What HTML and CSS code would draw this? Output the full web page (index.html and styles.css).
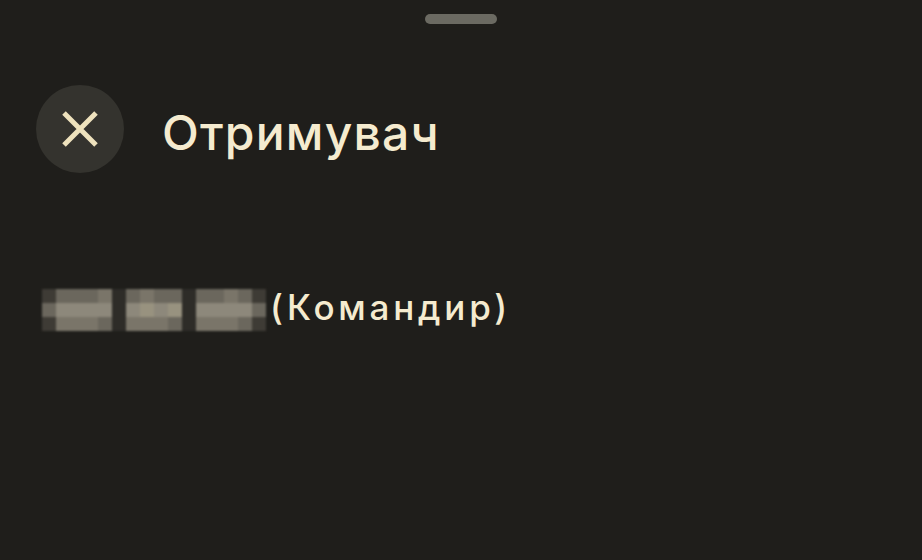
FILE: index.html
```html
<!DOCTYPE html>
<html lang="uk">
<head>
<meta charset="utf-8">
<link rel="stylesheet" href="styles.css">
</head>
<body>
<div class="sheet">
  <div class="handle"></div>
  <div class="header">
    <button class="close" aria-label="Закрити">
      <svg width="38" height="38" viewBox="0 0 38 38"><path d="M3 3 L35 35 M35 3 L3 35" stroke="#eee2bd" stroke-width="5" stroke-linecap="butt" fill="none"/></svg>
    </button>
    <h1 class="title">Отримувач</h1>
  </div>
  <div class="recipient">
    <div class="blur">
      <span class="p a"></span><span class="p b"></span><span class="p b"></span><span class="p b"></span><span class="p c"></span><span class="p d"></span><span class="p b"></span><span class="p c"></span><span class="p b"></span><span class="p b"></span><span class="p d"></span><span class="p b"></span><span class="p b"></span><span class="p c"></span><span class="p b"></span><span class="p a"></span>
      <span class="p b"></span><span class="p e"></span><span class="p e"></span><span class="p e"></span><span class="p e"></span><span class="p d"></span><span class="p e"></span><span class="p f"></span><span class="p e"></span><span class="p f"></span><span class="p d"></span><span class="p e"></span><span class="p e"></span><span class="p e"></span><span class="p e"></span><span class="p b"></span>
      <span class="p a"></span><span class="p c"></span><span class="p c"></span><span class="p c"></span><span class="p b"></span><span class="p d"></span><span class="p c"></span><span class="p c"></span><span class="p c"></span><span class="p b"></span><span class="p d"></span><span class="p c"></span><span class="p c"></span><span class="p c"></span><span class="p b"></span><span class="p a"></span>
    </div>
    <span class="role">(Командир)</span>
  </div>
</div>
</body>
</html>
```
FILE: styles.css
```css
html, body {
  margin: 0;
  padding: 0;
  background: #1f1e1b;
}
.sheet {
  width: 922px;
  height: 560px;
  font-family: Inter, "Noto Sans", sans-serif;
  color: #f5ebcf;
  display: flex;
  flex-direction: column;
}
.handle {
  align-self: center;
  width: 72px;
  height: 10px;
  border-radius: 5px;
  background: #6b6a62;
  margin-top: 14px;
}
.header {
  display: flex;
  align-items: center;
  margin-top: 61px;
  padding-left: 36px;
  gap: 38px;
}
.close {
  width: 88px;
  height: 88px;
  border-radius: 50%;
  border: none;
  padding: 0;
  background: #34332e;
  display: flex;
  align-items: center;
  justify-content: center;
}
.title {
  margin: 6px 0 0 0;
  font-size: 48px;
  font-weight: 500;
  letter-spacing: 1.2px;
}
.recipient {
  display: flex;
  align-items: center;
  margin-top: 113px;
  padding-left: 42px;
}
.blur {
  display: grid;
  grid-template-columns: repeat(16, 14px);
  grid-template-rows: repeat(3, 14px);
  filter: blur(1.2px);
}
.p { display: block; }
.a { background: #3e3b35; }
.b { background: #6b675d; }
.c { background: #7a7569; }
.d { background: #2e2c28; }
.e { background: #8d887b; }
.f { background: #98927f; }
.role {
  margin: 0 0 6px 4px;
  font-size: 35px;
  font-weight: 500;
  letter-spacing: 3.8px;
}
```
